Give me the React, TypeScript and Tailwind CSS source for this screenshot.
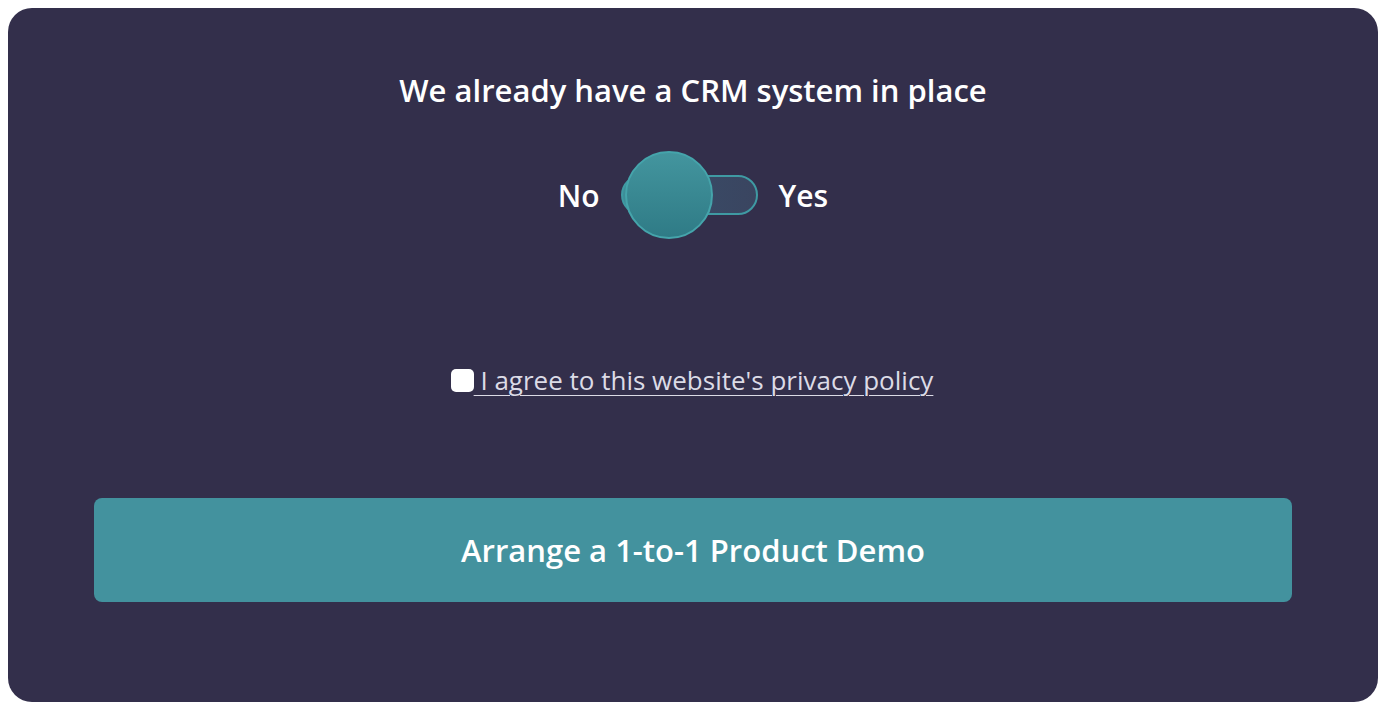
import React from "react";

export default function App() {
  return (
    <div className="w-[1388px] h-[718px] bg-white p-2" style={{ fontFamily: '"Open Sans", "Noto Sans", sans-serif' }}>
      <div className="w-[1370px] h-[694px] rounded-[24px] bg-[#332f4b] flex flex-col items-center pt-[62px] px-[86px]">
        <h1 className="text-[31px] leading-[41px] font-semibold text-white">
          We already have a CRM system in place
        </h1>
        <div className="mt-[40px] h-[88px] flex items-center">
          <span className="text-[30px] font-semibold text-white mr-[21px]">No</span>
          <div className="relative w-[137px] h-[40px]">
            <div className="absolute inset-0 rounded-full border-2 border-[#3f9aa3] bg-gradient-to-r from-[#3d8f99] via-[#394a66] to-[#3a4560]" />
            <div className="absolute left-[4px] top-[-24px] w-[88px] h-[88px] rounded-full border-2 border-[#45a4ab] bg-gradient-to-b from-[#43959e] to-[#2f7b86]" />
          </div>
          <span className="text-[30px] font-semibold text-white ml-[21px]">Yes</span>
        </div>
        <label className="mt-[125px] flex items-center text-[26px] leading-[32px] text-[#dcdbe6] -ml-[2px]">
          <span className="w-[23px] h-[23px] rounded-[5px] bg-white inline-block" />
          <span className="underline underline-offset-[5px] decoration-[1px]">&nbsp;I agree to this website's privacy policy</span>
        </label>
        <button className="mt-[102px] w-full h-[104px] rounded-[8px] bg-[#43929e] text-white text-[31px] font-semibold">
          Arrange a 1-to-1 Product Demo
        </button>
      </div>
    </div>
  );
}
